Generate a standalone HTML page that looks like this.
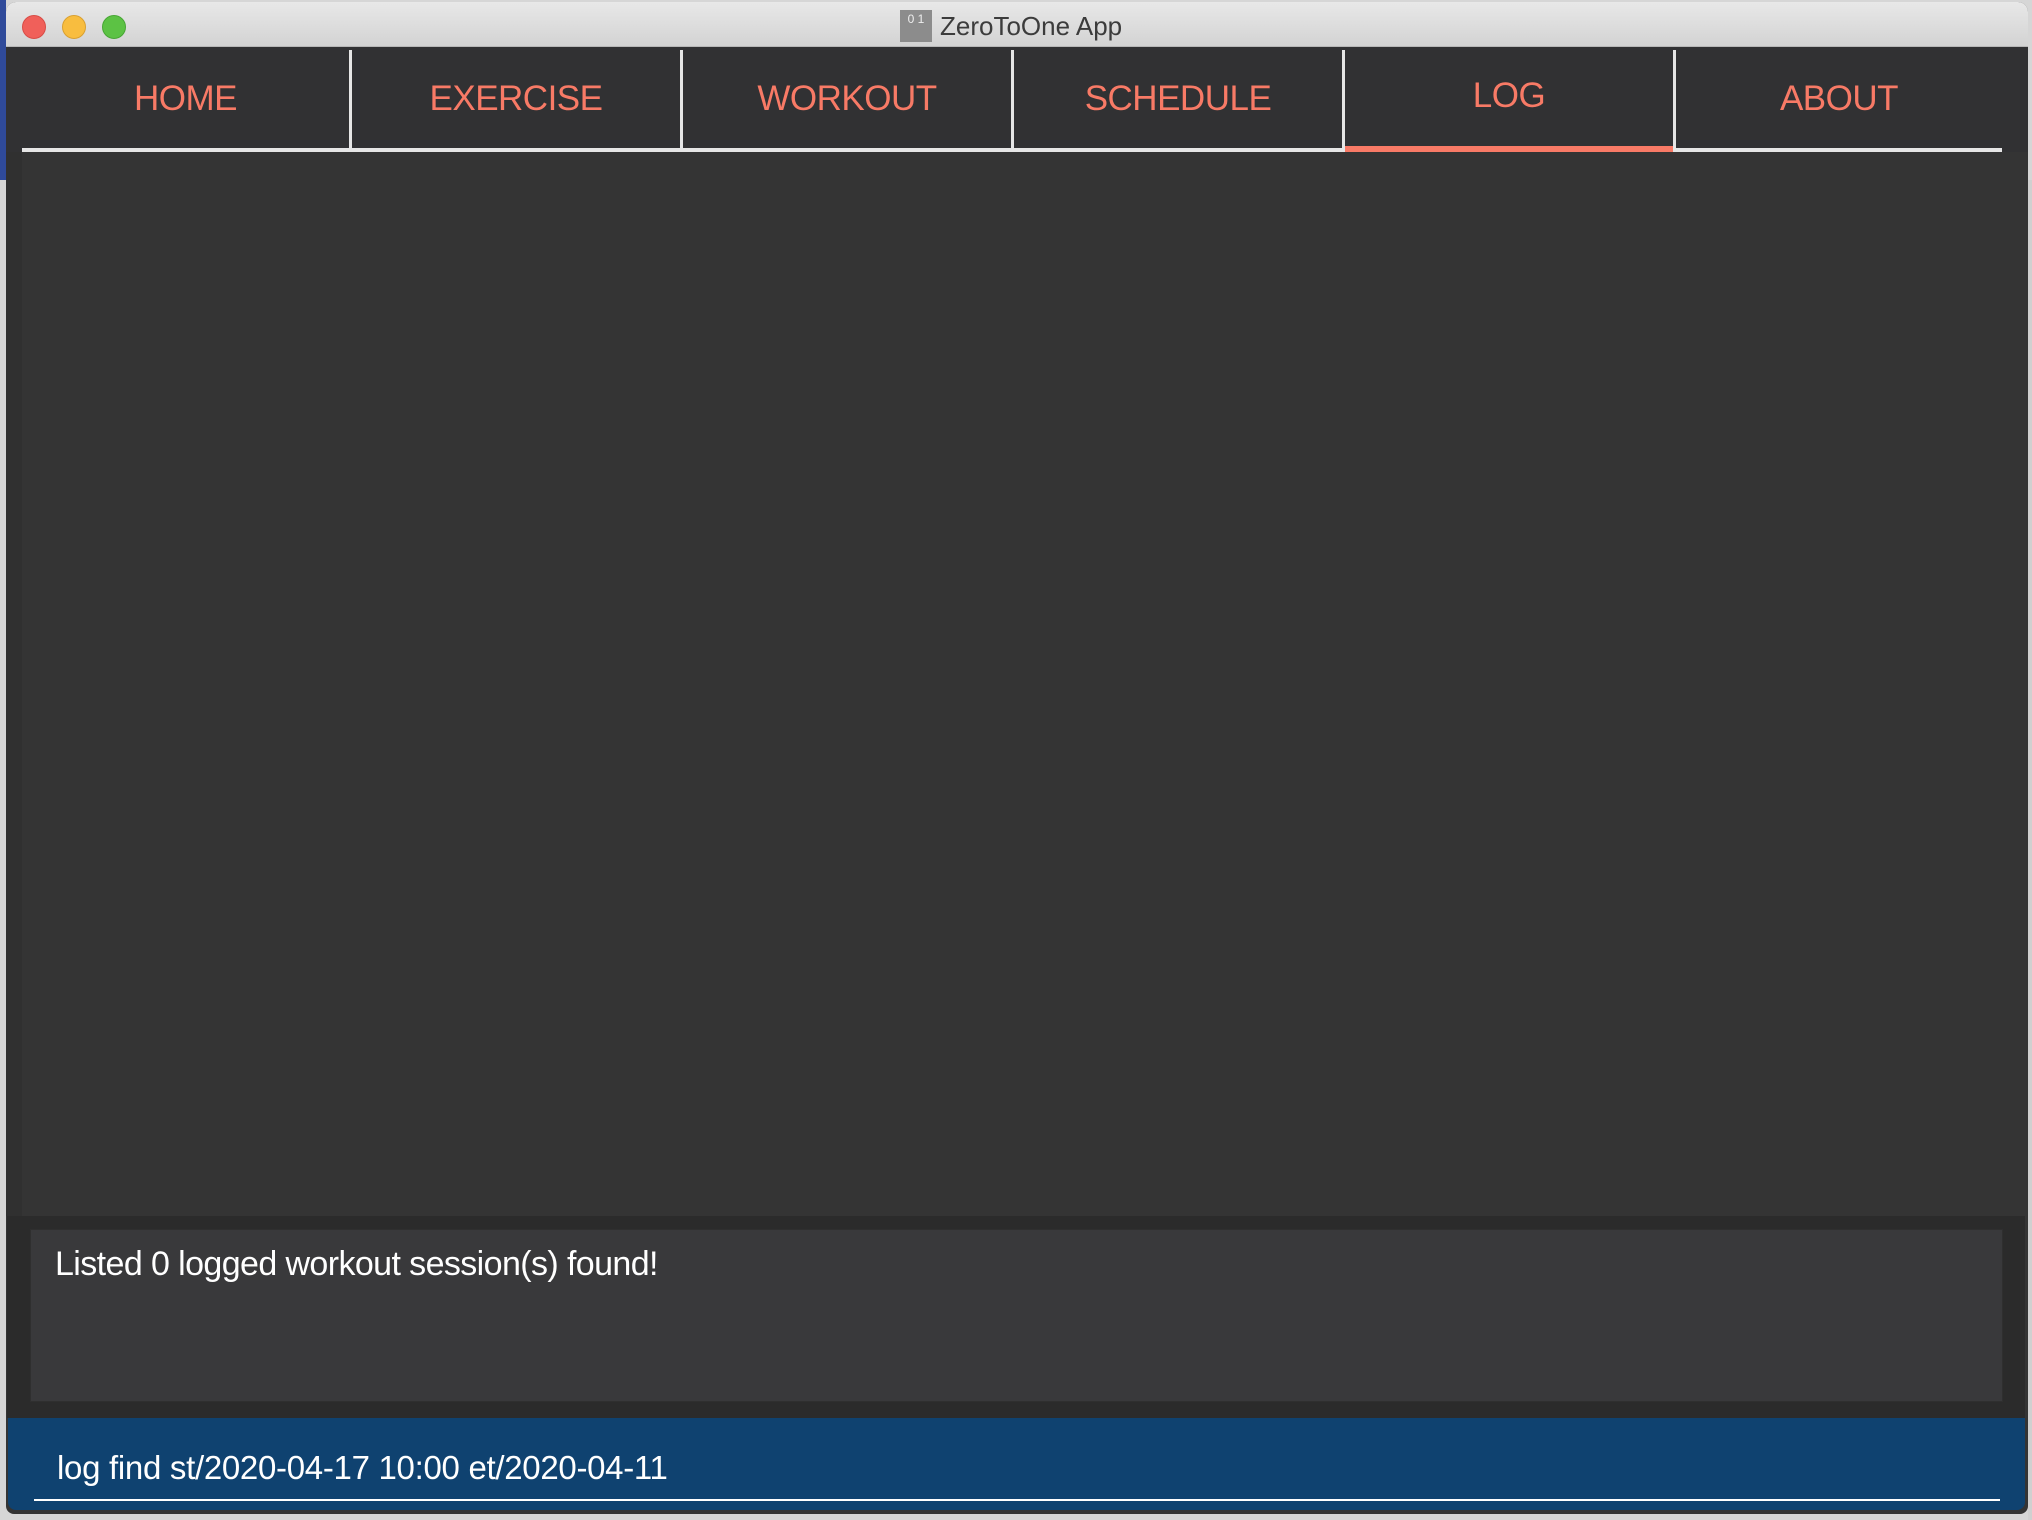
<!DOCTYPE html>
<html><head><meta charset="utf-8"><style>
*{margin:0;padding:0;box-sizing:border-box}
body{width:2032px;height:1520px;overflow:hidden;background:#d6d6d6;position:relative;font-family:"Liberation Sans",sans-serif}
.abs{position:absolute}
.t{top:79px;font-size:35px;color:#f87a66;line-height:40px;text-align:center;letter-spacing:-0.5px}
</style></head><body>
<div class="abs" style="left:0;top:0;width:6px;height:180px;background:#2f4a9a"></div>
<div class="abs" style="left:2028px;top:180px;width:4px;height:1340px;background:#d0d0d0"></div>
<div class="abs" style="left:6px;top:2px;width:2022px;height:1512px;background:#343434;border-radius:10px 10px 8px 8px;overflow:hidden">
  <div class="abs" style="left:0;top:0;width:2022px;height:45px;background:linear-gradient(#e8e8e8,#d3d3d3);border-bottom:1px solid #b8b8b8"></div>
  <div class="abs" style="left:16px;top:13px;width:24px;height:24px;border-radius:50%;background:#f0605a;border:1px solid #d84c46"></div>
  <div class="abs" style="left:56px;top:13px;width:24px;height:24px;border-radius:50%;background:#f8bd3f;border:1px solid #d9a030"></div>
  <div class="abs" style="left:96px;top:13px;width:24px;height:24px;border-radius:50%;background:#5cc244;border:1px solid #47a634"></div>
  <div class="abs" style="left:894px;top:8px;width:32px;height:32px;background:#8c8c8c;color:#eee;font-size:12px;text-align:center;line-height:18px">0 1</div>
  <div class="abs" style="left:934px;top:7px;font-size:26px;color:#3c3c3c;line-height:34px">ZeroToOne App</div>
  <div class="abs" style="left:0;top:45px;width:2022px;height:105px;background:#313133"></div>
  <div class="abs" style="left:0;top:150px;width:16px;height:1064px;background:#303030"></div>
</div>
<div class="abs" style="left:22px;top:148px;width:1980px;height:4px;background:#e6e6e6"></div>
<div class="abs" style="left:1345px;top:146px;width:328px;height:6px;background:#f87a66"></div>
<div class="abs" style="left:349px;top:50px;width:3px;height:100px;background:#e6e6e6"></div>
<div class="abs" style="left:680px;top:50px;width:3px;height:100px;background:#e6e6e6"></div>
<div class="abs" style="left:1011px;top:50px;width:3px;height:100px;background:#e6e6e6"></div>
<div class="abs" style="left:1342px;top:50px;width:3px;height:100px;background:#e6e6e6"></div>
<div class="abs" style="left:1673px;top:50px;width:3px;height:100px;background:#e6e6e6"></div>
<div class="abs t" style="left:22px;width:327px">HOME</div>
<div class="abs t" style="left:352px;width:328px">EXERCISE</div>
<div class="abs t" style="left:683px;width:328px">WORKOUT</div>
<div class="abs t" style="left:1014px;width:328px">SCHEDULE</div>
<div class="abs t" style="left:1345px;width:328px;top:76px">LOG</div>
<div class="abs t" style="left:1676px;width:326px">ABOUT</div>
<div class="abs" style="left:7px;top:1216px;width:2018px;height:202px;background:#2b2b2b"></div>
<div class="abs" style="left:30px;top:1229px;width:1973px;height:173px;background:#39393b;border:1px solid #2f2f2f"></div>
<div class="abs" style="left:55px;top:1244px;font-size:34px;color:#fff;line-height:40px;letter-spacing:-0.6px">Listed 0 logged workout session(s) found!</div>
<div class="abs" style="left:8px;top:1418px;width:2017px;height:92px;background:#0f4270;border-radius:0 0 8px 8px"></div>
<div class="abs" style="left:57px;top:1448px;font-size:33px;color:#fff;line-height:40px;letter-spacing:-0.3px">log find st/2020-04-17 10:00 et/2020-04-11</div>
<div class="abs" style="left:34px;top:1499px;width:1966px;height:2px;background:#fff"></div>
</body></html>
